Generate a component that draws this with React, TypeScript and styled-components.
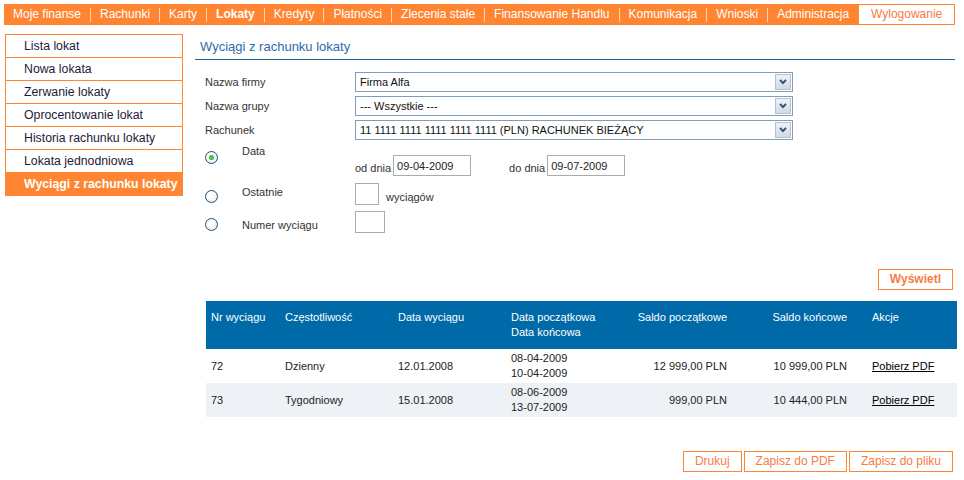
import { Fragment } from 'react'
import styled, { createGlobalStyle } from 'styled-components'

const GlobalStyle = createGlobalStyle`
	body {
		margin: 0;
		background: #fff;
		font-family: "Liberation Sans", Arial, sans-serif;
		color: #222;
	}
`

const ORANGE = '#ff8533'

const Page = styled.div`
	width: 964px;
	padding-top: 4px;
`

const Nav = styled.nav`
	display: flex;
	align-items: center;
	height: 21px;
	margin: 0 9px 0 4px;
	background: ${ORANGE};
`

const NavItem = styled.a<{ $active?: boolean }>`
	padding: 0 9px;
	font-size: 12px;
	line-height: 21px;
	color: #fff;
	font-weight: ${p => (p.$active ? 'bold' : 'normal')};
	white-space: nowrap;
`

const NavSep = styled.span`
	width: 1px;
	height: 14px;
	background: #ffd2b0;
`

const Logout = styled.a`
	margin-left: auto;
	height: 21px;
	box-sizing: border-box;
	width: 99px;
	border: 1px solid ${ORANGE};
	background: #fff;
	color: #f77b45;
	font-size: 12px;
	line-height: 19px;
	text-align: center;
`

const Main = styled.div`
	display: flex;
	align-items: flex-start;
	margin-top: 9px;
`

const Sidebar = styled.ul`
	list-style: none;
	margin: 0 0 0 5px;
	padding: 0;
	width: 178px;
	box-sizing: border-box;
	border: 1px solid ${ORANGE};
`

const SideItem = styled.li<{ $active?: boolean }>`
	height: 22px;
	line-height: 22px;
	padding-left: 18px;
	font-size: 12.3px;
	color: ${p => (p.$active ? '#fff' : '#1e1a3a')};
	background: ${p => (p.$active ? ORANGE : '#fff')};
	font-weight: ${p => (p.$active ? 'bold' : 'normal')};
	& + & {
		border-top: 1px solid ${ORANGE};
	}
`

const Content = styled.section`
	margin-left: 12px;
	width: 762px;
`

const Title = styled.h1`
	margin: 0 2px 0 0;
	padding: 5px 0 4px 5px;
	font-size: 13px;
	line-height: 16px;
	font-weight: normal;
	color: #2b6dab;
	border-bottom: 1px solid #1d6695;
`

const Form = styled.div`
	margin-top: 12px;
	padding-left: 10px;
`

const FieldRow = styled.div`
	display: grid;
	grid-template-columns: 150px 438px;
	align-items: center;
	height: 20px;
	margin-bottom: 4px;
`

const Label = styled.span`
	font-size: 11px;
	color: #333;
`

const Select = styled.div`
	display: flex;
	align-items: center;
	height: 20px;
	box-sizing: border-box;
	border: 1px solid #7f9db9;
	font-size: 11px;
	color: #111;
	padding-left: 4px;
`

const SelectText = styled.span`
	flex: 1;
`

const SelectArrow = styled.span`
	width: 16px;
	height: 16px;
	margin-right: 1px;
	box-sizing: border-box;
	border: 1px solid #b3bfd3;
	background: linear-gradient(#eef1f7, #d3d9e6);
	display: flex;
	align-items: center;
	justify-content: center;
`

const ChoiceRow = styled.div<{ $mt: number }>`
	display: grid;
	grid-template-columns: 37px 113px auto;
	align-items: start;
	margin-top: ${p => p.$mt}px;
`

const Radio = styled.span<{ $checked?: boolean; $mt: number }>`
	margin-top: ${p => p.$mt}px;
	width: 13px;
	height: 13px;
	box-sizing: border-box;
	border-radius: 50%;
	border: 1px solid #1c5180;
	background: radial-gradient(circle at 40% 40%, #fff 30%, #dcdcd6 100%);
	display: flex;
	align-items: center;
	justify-content: center;
	&::after {
		content: '';
		display: ${p => (p.$checked ? 'block' : 'none')};
		width: 5px;
		height: 5px;
		border-radius: 50%;
		background: radial-gradient(circle, #5fd35f, #21a121);
	}
`

const ChoiceLabel = styled.span<{ $mt: number }>`
	margin-top: ${p => p.$mt}px;
	font-size: 11px;
	line-height: 14px;
	color: #333;
`

const Controls = styled.div<{ $mt?: number }>`
	display: flex;
	align-items: flex-end;
	margin-top: ${p => p.$mt ?? 0}px;
`

const InlineText = styled.span<{ $ml?: number; $pb?: number }>`
	font-size: 11px;
	color: #333;
	margin-left: ${p => p.$ml ?? 0}px;
	padding-bottom: ${p => p.$pb ?? 0}px;
`

const TextInput = styled.input<{ $w: number; $h: number; $ml?: number }>`
	width: ${p => p.$w}px;
	height: ${p => p.$h}px;
	margin: 0 0 0 ${p => p.$ml ?? 0}px;
	box-sizing: border-box;
	border: 1px solid #a5acb2;
	padding: 0 3px;
	font-family: "Liberation Sans", Arial, sans-serif;
	font-size: 11px;
	color: #222;
	outline: none;
`

const ButtonBar = styled.div<{ $mt: number }>`
	display: flex;
	justify-content: flex-end;
	gap: 2px;
	margin-top: ${p => p.$mt}px;
	padding-right: 4px;
`

const Button = styled.button<{ $bold?: boolean }>`
	height: 21px;
	padding: 0 11px;
	border: 1px solid ${ORANGE};
	background: #fff;
	color: #f77b45;
	font-family: "Liberation Sans", Arial, sans-serif;
	font-size: 12px;
	font-weight: ${p => (p.$bold ? 'bold' : 'normal')};
	line-height: 19px;
	cursor: pointer;
`

const Table = styled.table`
	margin: 11px 0 0 11px;
	width: 751px;
	border-collapse: collapse;
	table-layout: fixed;
	font-size: 11px;
`

const Th = styled.th<{ $right?: boolean; $pr?: number }>`
	height: 48px;
	box-sizing: border-box;
	padding: 9px ${p => p.$pr ?? 5}px 0 5px;
	vertical-align: top;
	text-align: ${p => (p.$right ? 'right' : 'left')};
	font-weight: normal;
	line-height: 15px;
	color: #fff;
	background: #0069a8;
`

const Tr = styled.tr<{ $alt?: boolean }>`
	background: ${p => (p.$alt ? '#eef2f7' : '#fff')};
`

const Td = styled.td<{ $right?: boolean; $pr?: number }>`
	height: 34px;
	padding: 0 ${p => p.$pr ?? 5}px 0 5px;
	vertical-align: middle;
	text-align: ${p => (p.$right ? 'right' : 'left')};
	line-height: 15px;
	color: #222;
`

const PdfLink = styled.a`
	color: #000;
	text-decoration: underline;
`

const Chevron = () => (
	<svg width="10" height="8" viewBox="0 0 10 8">
		<path d="M2 2 L5 5 L8 2" fill="none" stroke="#3f5277" strokeWidth="2" />
	</svg>
)

const navItems = [
	'Moje finanse',
	'Rachunki',
	'Karty',
	'Lokaty',
	'Kredyty',
	'Płatności',
	'Zlecenia stałe',
	'Finansowanie Handlu',
	'Komunikacja',
	'Wnioski',
	'Administracja',
]

const sideItems = [
	'Lista lokat',
	'Nowa lokata',
	'Zerwanie lokaty',
	'Oprocentowanie lokat',
	'Historia rachunku lokaty',
	'Lokata jednodniowa',
	'Wyciągi z rachunku lokaty',
]

const statements = [
	{ nr: '72', freq: 'Dzienny', date: '12.01.2008', from: '08-04-2009', to: '10-04-2009', start: '12 999,00 PLN', end: '10 999,00 PLN' },
	{ nr: '73', freq: 'Tygodniowy', date: '15.01.2008', from: '08-06-2009', to: '13-07-2009', start: '999,00 PLN', end: '10 444,00 PLN' },
]

const App = () => (
	<Page>
		<GlobalStyle />
		<Nav>
			{navItems.map((item, i) => (
				<Fragment key={item}>
					{i > 0 && <NavSep />}
					<NavItem $active={item === 'Lokaty'}>{item}</NavItem>
				</Fragment>
			))}
			<Logout>Wylogowanie</Logout>
		</Nav>
		<Main>
			<Sidebar>
				{sideItems.map((item, i) => (
					<SideItem key={item} $active={i === sideItems.length - 1}>
						{item}
					</SideItem>
				))}
			</Sidebar>
			<Content>
				<Title>Wyciągi z rachunku lokaty</Title>
				<Form>
					<FieldRow>
						<Label>Nazwa firmy</Label>
						<Select>
							<SelectText>Firma Alfa</SelectText>
							<SelectArrow><Chevron /></SelectArrow>
						</Select>
					</FieldRow>
					<FieldRow>
						<Label>Nazwa grupy</Label>
						<Select>
							<SelectText>--- Wszystkie ---</SelectText>
							<SelectArrow><Chevron /></SelectArrow>
						</Select>
					</FieldRow>
					<FieldRow>
						<Label>Rachunek</Label>
						<Select>
							<SelectText>11 1111 1111 1111 1111 1111 (PLN) RACHUNEK BIEŻĄCY</SelectText>
							<SelectArrow><Chevron /></SelectArrow>
						</Select>
					</FieldRow>

					<ChoiceRow $mt={2}>
						<Radio $checked $mt={7} />
						<ChoiceLabel $mt={0}>Data</ChoiceLabel>
						<Controls $mt={11}>
							<InlineText $pb={2}>od dnia</InlineText>
							<TextInput $w={78} $h={21} $ml={2} readOnly value="09-04-2009" />
							<InlineText $ml={38} $pb={2}>do dnia</InlineText>
							<TextInput $w={78} $h={21} $ml={2} readOnly value="09-07-2009" />
						</Controls>
					</ChoiceRow>
					<ChoiceRow $mt={7}>
						<Radio $mt={7} />
						<ChoiceLabel $mt={2}>Ostatnie</ChoiceLabel>
						<Controls>
							<TextInput $w={24} $h={22} readOnly value="" />
							<InlineText $ml={7} $pb={2}>wyciągów</InlineText>
						</Controls>
					</ChoiceRow>
					<ChoiceRow $mt={6}>
						<Radio $mt={7} />
						<ChoiceLabel $mt={7}>Numer wyciągu</ChoiceLabel>
						<Controls>
							<TextInput $w={30} $h={22} readOnly value="" />
						</Controls>
					</ChoiceRow>
				</Form>

				<ButtonBar $mt={36}>
					<Button $bold>Wyświetl</Button>
				</ButtonBar>

				<Table>
					<colgroup>
						<col style={{ width: 74 }} />
						<col style={{ width: 113 }} />
						<col style={{ width: 113 }} />
						<col style={{ width: 114 }} />
						<col style={{ width: 112 }} />
						<col style={{ width: 135 }} />
						<col style={{ width: 90 }} />
					</colgroup>
					<thead>
						<tr>
							<Th>Nr wyciągu</Th>
							<Th>Częstotliwość</Th>
							<Th>Data wyciągu</Th>
							<Th>Data początkowa<br />Data końcowa</Th>
							<Th $right>Saldo początkowe</Th>
							<Th $right $pr={20}>Saldo końcowe</Th>
							<Th>Akcje</Th>
						</tr>
					</thead>
					<tbody>
						{statements.map((s, i) => (
							<Tr key={s.nr} $alt={i % 2 === 1}>
								<Td>{s.nr}</Td>
								<Td>{s.freq}</Td>
								<Td>{s.date}</Td>
								<Td>{s.from}<br />{s.to}</Td>
								<Td $right>{s.start}</Td>
								<Td $right $pr={20}>{s.end}</Td>
								<Td><PdfLink>Pobierz PDF</PdfLink></Td>
							</Tr>
						))}
					</tbody>
				</Table>

				<ButtonBar $mt={34}>
					<Button>Drukuj</Button>
					<Button>Zapisz do PDF</Button>
					<Button>Zapisz do pliku</Button>
				</ButtonBar>
			</Content>
		</Main>
	</Page>
)

export default App
